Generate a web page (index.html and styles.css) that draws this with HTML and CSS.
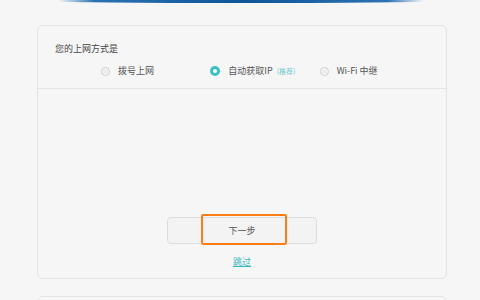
FILE: index.html
```html
<!DOCTYPE html>
<html>
<head>
    <meta charset="UTF-8">
    <title>上网向导</title>
    <link rel="stylesheet" href="styles.css">
</head>
<body>
    <div class="top-arc"></div>
    <div class="wizard-card">
        <div class="wizard-head">
            <div class="wizard-title">您的上网方式是</div>
            <div class="radio-row">
                <label class="radio-item">
                    <span class="radio"></span>
                    <span>拨号上网</span>
                </label>
                <label class="radio-item">
                    <span class="radio checked"></span>
                    <span>自动获取IP</span>
                    <span class="hint">(推荐)</span>
                </label>
                <label class="radio-item">
                    <span class="radio"></span>
                    <span>Wi-Fi 中继</span>
                </label>
            </div>
        </div>
        <div class="wizard-body">
            <div class="btn-wrap">
                <button class="btn-next">下一步</button>
                <span class="focus-ring"></span>
            </div>
            <a href="#" class="skip-link">跳过</a>
        </div>
    </div>
    <div class="wizard-card next-card"></div>
</body>
</html>
```

FILE: styles.css
```css
body {
    font-family: "Noto Sans CJK SC", "Noto Sans", sans-serif;
    background-color: #f6f6f6;
    margin: 0;
    overflow: hidden;
    color: #555;
}
.top-arc {
    height: 3px;
    margin: 0 56px 0 58px;
    border-radius: 0 0 50% 50%;
    background: linear-gradient(90deg, rgba(30,100,170,0) 0%, #2a72b4 10%, #0e5597 50%, #2a72b4 90%, rgba(30,100,170,0) 100%);
}
.wizard-card {
    margin: 22px 33px 0 37px;
    border: 1px solid #e3e3e3;
    border-radius: 6px;
    background: #f6f6f6;
}
.wizard-head {
    height: 45px;
    padding: 17px 17px 0 17px;
    border-bottom: 1px solid #e3e3e3;
}
.wizard-title {
    font-size: 9px;
    line-height: 12px;
    color: #444;
}
.radio-row {
    display: flex;
    margin: 10px 0 0 46px;
}
.radio-item {
    display: flex;
    align-items: center;
    width: 110px;
    font-size: 9px;
    line-height: 12px;
    color: #555;
}
.radio {
    width: 7px;
    height: 7px;
    border: 1px solid #cfcfcf;
    border-radius: 50%;
    background: #ececec;
    box-shadow: inset 0 0 0 1px #fafafa;
    margin-right: 8px;
}
.radio.checked {
    width: 4px;
    height: 4px;
    border: 3px solid #3cbfc4;
    background: #fff;
    box-shadow: none;
}
.hint {
    font-size: 7px;
    color: #6cc8cc;
    margin-left: 4px;
}
.wizard-body {
    height: 189px;
    display: flex;
    flex-direction: column;
    align-items: center;
    padding-top: 128px;
    box-sizing: border-box;
}
.btn-wrap {
    position: relative;
}
.btn-next {
    width: 150px;
    height: 27px;
    border: 1px solid #dcdcdc;
    border-radius: 4px;
    background: #f3f3f3;
    font-family: inherit;
    font-size: 9px;
    color: #555;
    display: block;
}
.focus-ring {
    position: absolute;
    left: 34px;
    top: -3px;
    width: 82px;
    height: 27px;
    border: 2px solid #ff7d16;
    border-radius: 2px;
}
.skip-link {
    margin-top: 12px;
    font-size: 9px;
    line-height: 12px;
    color: #39b8bd;
    text-decoration: underline;
}
.next-card {
    margin-top: 17px;
    height: 60px;
}
```
